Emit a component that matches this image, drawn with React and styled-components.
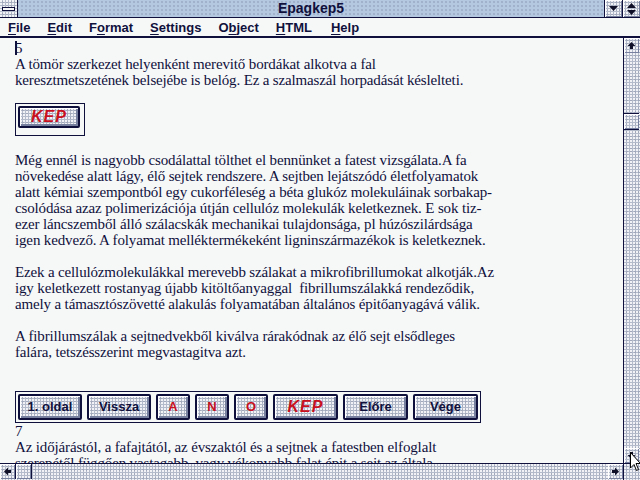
import React from "react"
import styled, { createGlobalStyle } from "styled-components"

const navy = "#10103c"
const noise = `
    background-color: #b4bccc;
    background-image:
        radial-gradient(circle at 1px 1px, #f4f4f8 0.7px, transparent 0.9px),
        radial-gradient(circle at 3px 2px, #8890a4 0.6px, transparent 0.8px);
    background-size: 3px 3px, 4px 4px;
`

const Global = createGlobalStyle`
    html, body {
        margin: 0;
        padding: 0;
        width: 640px;
        height: 480px;
        overflow: hidden;
        background: #f6f8f8;
    }
`

const Window = styled.div`
    width: 640px;
    height: 480px;
    display: flex;
    flex-direction: column;
    overflow: hidden;
    position: relative;
    font-family: "Liberation Sans", Arial, sans-serif;
    color: ${navy};
`

const TitleBar = styled.div`
    height: 17px;
    display: flex;
    align-items: stretch;
    border-bottom: 1px solid ${navy};
    background-color: #b4c8e0;
    background-image: radial-gradient(circle, #8898b4 0.6px, transparent 0.8px);
    background-size: 4px 4px;
`

const SysMenu = styled.div`
    width: 17px;
    border-right: 1px solid ${navy};
    display: flex;
    align-items: center;
    justify-content: center;
    ${noise}

    span {
        width: 11px;
        height: 2px;
        background: #f8f8f8;
        border: 1px solid ${navy};
    }
`

const Title = styled.div`
    flex: 1;
    text-align: center;
    font-weight: bold;
    font-size: 14px;
    line-height: 17px;
`

const CapButton = styled.div`
    width: 17px;
    border-left: 1px solid ${navy};
    display: flex;
    align-items: center;
    justify-content: center;
    box-shadow: inset 1px 1px 0 #fff, inset -1px -1px 0 #7880a0;
    ${noise}
`

const MenuBar = styled.div`
    height: 18px;
    display: flex;
    align-items: center;
    padding-left: 8px;
    background: #f6f8f8;
    border-bottom: 2px solid ${navy};
`

const MenuItem = styled.div`
    font-weight: bold;
    font-size: 13px;
    margin-right: ${p => p.$gap}px;

    u {
        text-decoration: underline;
        text-underline-offset: 2px;
    }
`

const Body = styled.div`
    flex: 1;
    display: flex;
    min-height: 0;
`

const Content = styled.div`
    flex: 1;
    overflow: hidden;
    padding: 2px 0 0 15px;
    background: #f6f8f8;
    font-family: "Liberation Serif", "Times New Roman", serif;
    font-size: 15px;
    letter-spacing: -0.15px;
    line-height: 16px;
    color: ${navy};
`

const Para = styled.p`
    margin: 0 0 ${p => p.$after ?? 16}px;
    white-space: nowrap;
`

const Caret = styled.span`
    display: inline-block;
    width: 2px;
    height: 14px;
    background: ${navy};
    vertical-align: -2px;
    margin-right: -2px;
`

const Frame = styled.div`
    display: inline-flex;
    gap: ${p => p.$gap || 0}px;
    border: 1px solid ${navy};
    padding: ${p => p.$pad};
    margin: ${p => p.$margin};
    background: #f6f8f8;
`

const Button = styled.div`
    width: ${p => p.$w}px;
    height: ${p => p.$h || 26}px;
    box-sizing: border-box;
    border: 2px solid ${navy};
    border-radius: 2px;
    display: flex;
    align-items: center;
    justify-content: center;
    box-shadow: inset 1px 1px 0 #fff, inset -2px -2px 0 #7880a0;
    ${noise}
    font-family: "Liberation Sans", Arial, sans-serif;
    font-weight: bold;
    font-size: ${p => (p.$kep ? 16 : 13)}px;
    font-style: ${p => (p.$kep ? "italic" : "normal")};
    color: ${p => (p.$red ? "#c81020" : navy)};
    letter-spacing: ${p => (p.$kep ? 1 : 0)}px;
`

const VScroll = styled.div`
    width: 16px;
    display: flex;
    flex-direction: column;
    border-left: 1px solid ${navy};
    ${noise}
`

const HScroll = styled.div`
    height: 16px;
    display: flex;
    border-top: 1px solid ${navy};
    ${noise}
`

const Arrow = styled.div`
    width: 15px;
    height: 15px;
    flex: none;
    display: flex;
    align-items: center;
    justify-content: center;
    box-shadow: inset 1px 1px 0 #fff, inset -1px -1px 0 #7880a0;
    border: ${p => p.$edge || "none"};
    ${noise}
`

const Track = styled.div`
    flex: ${p => p.$fixed ? `0 0 ${p.$fixed}px` : 1};
`

const Corner = styled.div`
    width: 16px;
    border-left: 1px solid ${navy};
`

const Cursor = styled.svg`
    position: absolute;
    left: 630px;
    top: 452px;
`

const Tri = ({ dir }) => {
    const rot = { up: 0, right: 90, down: 180, left: 270 }[dir]
    return (
        <svg width="9" height="9" viewBox="0 0 9 9" style={{ transform: `rotate(${rot}deg)` }}>
            <path d="M4.5 1 L8.5 5 L6 5 L6 8 L3 8 L3 5 L0.5 5 Z" fill="#101028" />
        </svg>
    )
}

const menus = [
    [<><u>F</u>ile</>, 17],
    [<><u>E</u>dit</>, 17],
    [<>F<u>o</u>rmat</>, 17],
    [<><u>S</u>ettings</>, 17],
    [<>O<u>b</u>ject</>, 17],
    [<><u>H</u>TML</>, 19],
    [<><u>H</u>elp</>, 0],
]

const nav = [
    { t: "1. oldal", w: 64 },
    { t: "Vissza", w: 64 },
    { t: "A", w: 34, red: true },
    { t: "N", w: 34, red: true },
    { t: "O", w: 34, red: true },
    { t: "KEP", w: 65, red: true, kep: true },
    { t: "Előre", w: 65 },
    { t: "Vége", w: 65 },
]

export default function App() {
    return (
        <Window>
            <Global />
            <TitleBar>
                <SysMenu><span /></SysMenu>
                <Title>Epagkep5</Title>
                <CapButton>
                    <svg width="9" height="6" viewBox="0 0 9 6"><path d="M0 0 H9 L4.5 5 Z" fill="#101028" /></svg>
                </CapButton>
                <CapButton>
                    <svg width="9" height="12" viewBox="0 0 9 12">
                        <path d="M4.5 0 L9 5 H0 Z M0 7 H9 L4.5 12 Z" fill="#101028" />
                    </svg>
                </CapButton>
            </TitleBar>
            <MenuBar>
                {menus.map(([label, g], i) => (
                    <MenuItem key={i} $gap={g}>{label}</MenuItem>
                ))}
            </MenuBar>
            <Body>
                <Content>
                    <Para $after={0}><Caret />5</Para>
                    <Para $after={15}>
                        A tömör szerkezet helyenként merevitő bordákat alkotva a fal<br />
                        keresztmetszetének belsejébe is belóg. Ez a szalmaszál horpadását késlelteti.
                    </Para>
                    <Frame $pad="2px 4px 7px 2px" $margin="0 0 16px">
                        <Button $w={62} $h={22} $red $kep>KEP</Button>
                    </Frame>
                    <Para>
                        Még ennél is nagyobb csodálattal tölthet el bennünket a fatest vizsgálata.A fa<br />
                        növekedése alatt lágy, élő sejtek rendszere. A sejtben lejátszódó életfolyamatok<br />
                        alatt kémiai szempontból egy cukorféleség a béta glukóz molekuláinak sorbakap-<br />
                        csolódása azaz polimerizációja útján cellulóz molekulák keletkeznek. E sok tiz-<br />
                        ezer láncszemből álló szálacskák mechanikai tulajdonsága, pl húzószilárdsága<br />
                        igen kedvező. A folyamat melléktermékeként ligninszármazékok is keletkeznek.
                    </Para>
                    <Para>
                        Ezek a cellulózmolekulákkal merevebb szálakat a mikrofibrillumokat alkotják.Az<br />
                        igy keletkezett rostanyag újabb kitöltőanyaggal&nbsp; fibrillumszálakká rendeződik,<br />
                        amely a támasztószövetté alakulás folyamatában általános épitőanyagává válik.
                    </Para>
                    <Para $after={31}>
                        A fibrillumszálak a sejtnedvekből kiválva rárakódnak az élő sejt elsődleges<br />
                        falára, tetszésszerint megvastagitva azt.
                    </Para>
                    <Frame $gap={5} $pad="2px 2px 2px 2px" $margin="0">
                        {nav.map(b => (
                            <Button key={b.t} $w={b.w} $red={b.red} $kep={b.kep}>{b.t}</Button>
                        ))}
                    </Frame>
                    <Para $after={0}>
                        7<br />
                        Az időjárástól, a fafajtától, az évszaktól és a sejtnek a fatestben elfoglalt<br />
                        szerepétől függően vastagabb, vagy vékonyabb falat épit a sejt az általa
                    </Para>
                </Content>
                <VScroll>
                    <Arrow><Tri dir="up" /></Arrow>
                    <Track $fixed={60} />
                    <Arrow $edge={`1px solid ${navy}`} style={{ borderLeft: 0, borderRight: 0 }} />
                    <Track />
                    <Arrow><Tri dir="down" /></Arrow>
                </VScroll>
            </Body>
            <HScroll>
                <Arrow><Tri dir="left" /></Arrow>
                <Arrow $edge={`1px solid ${navy}`} style={{ borderTop: 0, borderBottom: 0 }} />
                <Track />
                <Arrow><Tri dir="right" /></Arrow>
                <Corner />
            </HScroll>
            <Cursor width="12" height="20" viewBox="0 0 12 20">
                <path d="M0.5 0.5 L0.5 16 L4 12.5 L6.5 18.5 L8.5 17.5 L6 11.5 L10.5 11.5 Z" fill="#fff" stroke="#000" strokeWidth="1" />
            </Cursor>
        </Window>
    )
}
